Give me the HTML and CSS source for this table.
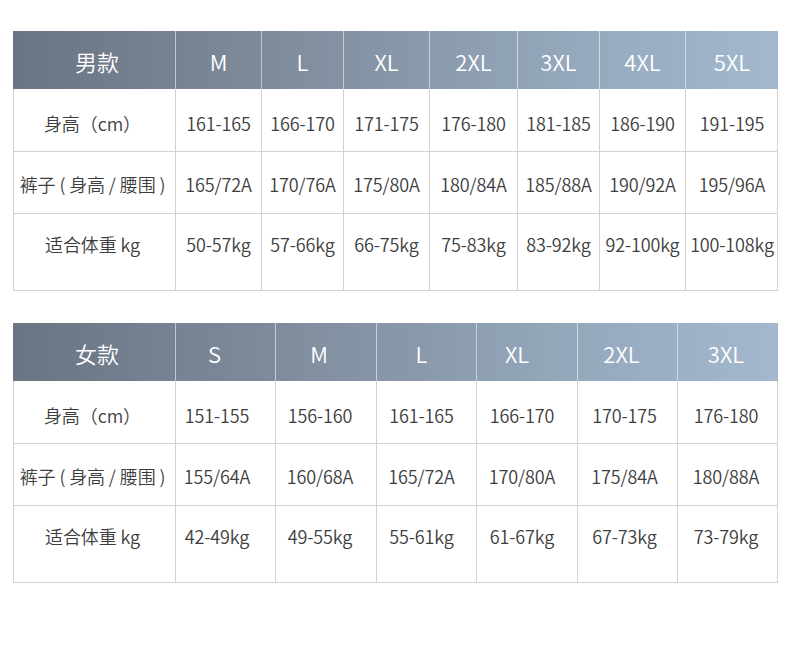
FILE: index.html
```html
<!DOCTYPE html>
<html lang="zh-CN">
<head>
<meta charset="utf-8">
<title>尺码表</title>
<link rel="stylesheet" href="styles.css">
</head>
<body>
<main class="page">
  <section class="chart chart-men">
    <div class="head">
      <div class="cell label">男款</div>
      <div class="cell">M</div>
      <div class="cell">L</div>
      <div class="cell">XL</div>
      <div class="cell">2XL</div>
      <div class="cell">3XL</div>
      <div class="cell">4XL</div>
      <div class="cell">5XL</div>
    </div>
    <div class="body">
      <div class="row r1">
        <div class="cell label">身高（cm）</div>
        <div class="cell">161-165</div>
        <div class="cell">166-170</div>
        <div class="cell">171-175</div>
        <div class="cell">176-180</div>
        <div class="cell">181-185</div>
        <div class="cell">186-190</div>
        <div class="cell">191-195</div>
      </div>
      <div class="row r2">
        <div class="cell label">裤子 ( 身高 / 腰围 )</div>
        <div class="cell">165/72A</div>
        <div class="cell">170/76A</div>
        <div class="cell">175/80A</div>
        <div class="cell">180/84A</div>
        <div class="cell">185/88A</div>
        <div class="cell">190/92A</div>
        <div class="cell">195/96A</div>
      </div>
      <div class="row r3">
        <div class="cell label">适合体重 kg</div>
        <div class="cell">50-57kg</div>
        <div class="cell">57-66kg</div>
        <div class="cell">66-75kg</div>
        <div class="cell">75-83kg</div>
        <div class="cell">83-92kg</div>
        <div class="cell">92-100kg</div>
        <div class="cell">100-108kg</div>
      </div>
    </div>
  </section>

  <section class="chart chart-women">
    <div class="head">
      <div class="cell label">女款</div>
      <div class="cell">S</div>
      <div class="cell">M</div>
      <div class="cell">L</div>
      <div class="cell">XL</div>
      <div class="cell">2XL</div>
      <div class="cell">3XL</div>
    </div>
    <div class="body">
      <div class="row r1">
        <div class="cell label">身高（cm）</div>
        <div class="cell">151-155</div>
        <div class="cell">156-160</div>
        <div class="cell">161-165</div>
        <div class="cell">166-170</div>
        <div class="cell">170-175</div>
        <div class="cell">176-180</div>
      </div>
      <div class="row r2">
        <div class="cell label">裤子 ( 身高 / 腰围 )</div>
        <div class="cell">155/64A</div>
        <div class="cell">160/68A</div>
        <div class="cell">165/72A</div>
        <div class="cell">170/80A</div>
        <div class="cell">175/84A</div>
        <div class="cell">180/88A</div>
      </div>
      <div class="row r3">
        <div class="cell label">适合体重 kg</div>
        <div class="cell">42-49kg</div>
        <div class="cell">49-55kg</div>
        <div class="cell">55-61kg</div>
        <div class="cell">61-67kg</div>
        <div class="cell">67-73kg</div>
        <div class="cell">73-79kg</div>
      </div>
    </div>
  </section>
</main>
</body>
</html>
```

FILE: styles.css
```css
* { box-sizing: border-box; }

html, body {
  margin: 0;
  padding: 0;
  background: #ffffff;
}

body {
  font-family: "Noto Sans CJK SC", "Noto Sans", sans-serif;
  font-weight: 350;
  color: #3d3d3d;
}

.page {
  display: flex;
  flex-direction: column;
  gap: 32px;
  padding: 31px 0 0 13px;
  width: 790px;
}

.chart {
  width: 765px;
}

.head,
.row {
  display: grid;
}

.chart-men .head,
.chart-men .row {
  grid-template-columns: 162px 86px 82px 86px 88px 82px 86px 93px;
}

.chart-women .head,
.chart-women .row {
  grid-template-columns: 162px 100px 101px 100px 101px 100px 101px;
}

.head {
  height: 58px;
  width: 765px;
  background: linear-gradient(to right, #6a7483 0%, #7f8c9c 35%, #93a6ba 70%, #a3b8ce 100%);
}

.head .cell {
  display: flex;
  align-items: center;
  justify-content: center;
  color: #ffffff;
  font-size: 22px;
  line-height: 30px;
  padding-top: 2px;
  border-left: 1px solid rgba(255, 255, 255, 0.55);
}

.head .cell.label {
  border-left: none;
  padding-left: 6px;
}

.row {
  border-bottom: 1px solid #d2d2d2;
  border-right: 1px solid #d2d2d2;
}

.row .cell {
  display: flex;
  justify-content: center;
  align-items: flex-start;
  font-size: 18px;
  line-height: 26px;
  white-space: nowrap;
  border-left: 1px solid #d2d2d2;
  letter-spacing: -0.15px;
}

.row .cell.label {
  padding-right: 4px;
  letter-spacing: -0.1px;
}

.r1 { height: 63px; }
.r2 { height: 62px; }
.r3 { height: 77px; }

.r1 .cell { padding-top: 21px; }
.r2 .cell { padding-top: 19px; }
.r3 .cell { padding-top: 17px; }

.chart-women .head .cell:nth-child(2) { padding-right: 22px; }
.chart-women .head .cell:nth-child(3) { padding-right: 14px; }
.chart-women .head .cell:nth-child(4) { padding-right: 10px; }
.chart-women .head .cell:nth-child(5) { padding-right: 20px; }
.chart-women .head .cell:nth-child(6) { padding-right: 12px; }
.chart-women .head .cell:nth-child(7) { padding-right: 4px; }

.chart-women .row .cell:nth-child(2) { padding-right: 17px; }
.chart-women .row .cell:nth-child(3) { padding-right: 12px; }
.chart-women .row .cell:nth-child(4) { padding-right: 10px; }
.chart-women .row .cell:nth-child(5) { padding-right: 10px; }
.chart-women .row .cell:nth-child(6) { padding-right: 6px; }
.chart-women .row .cell:nth-child(7) { padding-right: 4px; }
```
